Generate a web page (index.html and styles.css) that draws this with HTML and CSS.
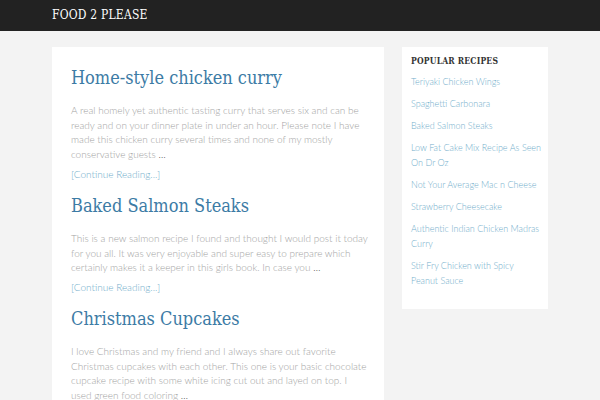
FILE: index.html
```html
<!DOCTYPE html>
<html lang="en">
<head>
    <meta charset="UTF-8">
    <meta name="viewport" content="width=device-width, initial-scale=1.0">
    <title>Food 2 Please</title>
    <link rel="stylesheet" href="styles.css">
</head>
<body>

    <header class="site-header">
        <div class="wrap">
            <a class="site-title" href="#">FOOD 2 PLEASE</a>
        </div>
    </header>

    <div class="wrap site-inner">
        <!-- Main post list -->
        <main class="content">
            <article class="entry">
                <h2 class="entry-title"><a href="#">Home-style chicken curry</a></h2>
                <p>A real homely yet authentic tasting curry that serves six and can be ready and on your dinner plate in under an hour. Please note I have made this chicken curry several times and none of my mostly conservative guests <span class="dots">&hellip;</span></p>
                <a class="more-link" href="#">[Continue Reading...]</a>
            </article>

            <article class="entry">
                <h2 class="entry-title"><a href="#">Baked Salmon Steaks</a></h2>
                <p>This is a new salmon recipe I found and thought I would post it today for you all. It was very enjoyable and super easy to prepare which certainly makes it a keeper in this girls book. In case you <span class="dots">&hellip;</span></p>
                <a class="more-link" href="#">[Continue Reading...]</a>
            </article>

            <article class="entry">
                <h2 class="entry-title"><a href="#">Christmas Cupcakes</a></h2>
                <p>I love Christmas and my friend and I always share out favorite Christmas cupcakes with each other. This one is your basic chocolate cupcake recipe with some white icing cut out and layed on top. I used green food coloring <span class="dots">&hellip;</span></p>
                <a class="more-link" href="#">[Continue Reading...]</a>
            </article>
        </main>

        <!-- Sidebar -->
        <aside class="sidebar">
            <section class="widget">
                <h4 class="widget-title">POPULAR RECIPES</h4>
                <ul>
                    <li><a href="#">Teriyaki Chicken Wings</a></li>
                    <li><a href="#">Spaghetti Carbonara</a></li>
                    <li><a href="#">Baked Salmon Steaks</a></li>
                    <li><a href="#">Low Fat Cake Mix Recipe As Seen On Dr Oz</a></li>
                    <li><a href="#">Not Your Average Mac n Cheese</a></li>
                    <li><a href="#">Strawberry Cheesecake</a></li>
                    <li><a href="#">Authentic Indian Chicken Madras Curry</a></li>
                    <li><a href="#">Stir Fry Chicken with Spicy Peanut Sauce</a></li>
                </ul>
            </section>
        </aside>
    </div>

</body>
</html>
```

FILE: styles.css
```css
/* Global styles */
body {
    margin: 0;
    padding: 0;
    background-color: #f3f3f3;
    font-family: Lato, "Open Sans", sans-serif;
    font-weight: 300;
    color: #a3a3a3;
}

a {
    text-decoration: none;
}

.wrap {
    width: 496px;
    margin: 0 auto;
}

/* Header */
.site-header {
    background-color: #222;
    height: 31px;
}

.site-header .wrap {
    display: flex;
    align-items: center;
    height: 100%;
}

.site-title {
    font-family: "DejaVu Serif", serif;
    font-stretch: condensed;
    font-size: 12px;
    color: #fff;
    letter-spacing: 0.2px;
    margin-top: -1px;
}

/* Layout */
.site-inner {
    display: flex;
    align-items: flex-start;
    gap: 18px;
    padding-top: 16px;
}

.content {
    flex: 0 0 332px;
    background-color: #fff;
    padding: 18px 15px 20px 19px;
    box-sizing: border-box;
}

.sidebar {
    flex: 0 0 146px;
}

/* Posts */
.entry {
    margin-bottom: 12px;
}

.entry-title {
    margin: 0 0 12px;
    font-family: "DejaVu Serif", serif;
    font-stretch: condensed;
    font-weight: normal;
    font-size: 18px;
    line-height: 26px;
}

.entry-title a {
    color: #3c7ba5;
}

.entry p {
    margin: 0 0 5px;
    font-size: 10px;
    line-height: 14.7px;
}

.dots {
    color: #333;
}

.more-link {
    display: block;
    font-size: 10px;
    line-height: 14px;
    color: #72aecb;
}

/* Sidebar widget */
.widget {
    background-color: #fff;
    padding: 9px 6px 14px 9px;
}

.widget-title {
    margin: 0 0 8px;
    font-family: "DejaVu Serif", serif;
    font-stretch: condensed;
    font-weight: bold;
    font-size: 8.5px;
    color: #333;
    letter-spacing: 0.2px;
}

.widget ul {
    list-style: none;
    margin: 0;
    padding: 0;
}

.widget li {
    font-size: 9px;
    line-height: 15px;
    margin-bottom: 7px;
}

.widget li a {
    color: #72aecb;
}
```
